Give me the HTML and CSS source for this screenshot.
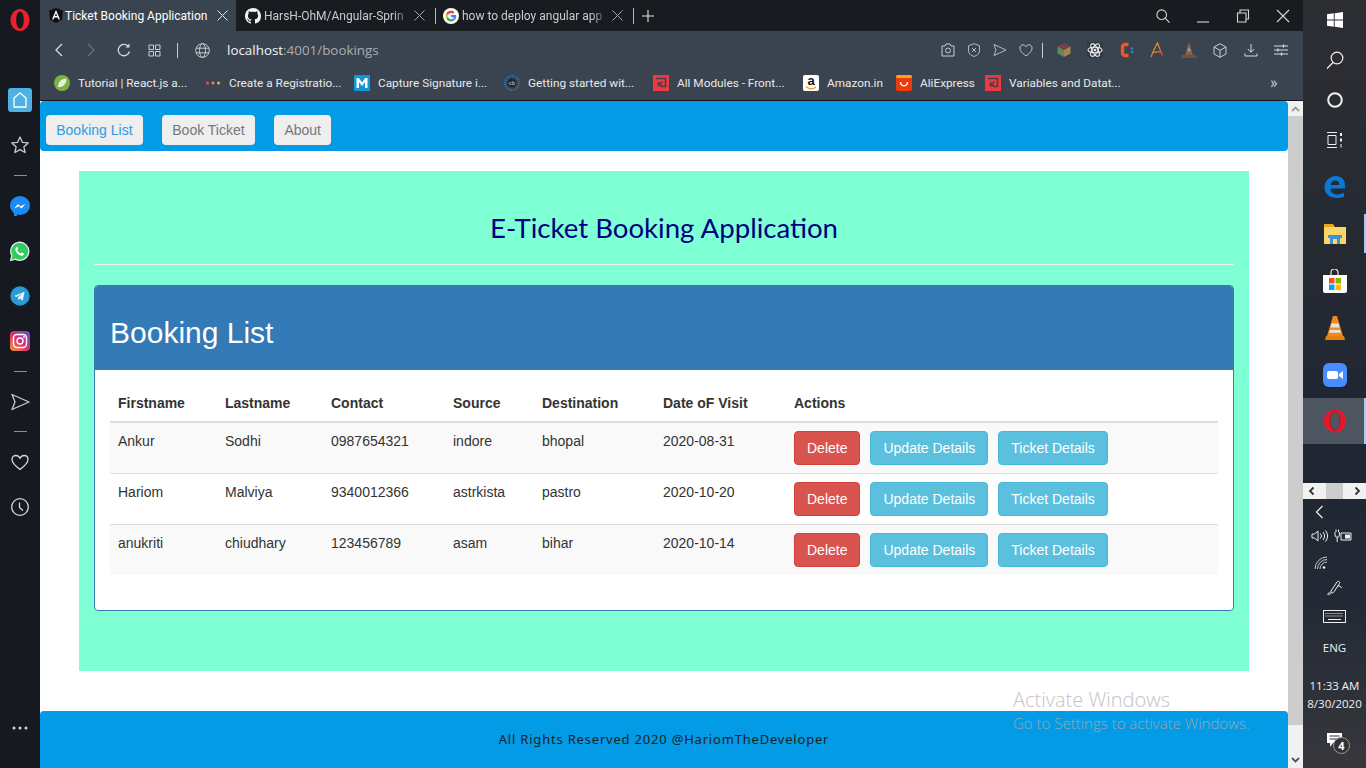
FILE: index.html
```html
<!DOCTYPE html>
<html lang="en">
<head>
<meta charset="UTF-8" />
<title>Ticket Booking Application</title>
<link rel="stylesheet" href="styles.css">
</head>
<body>

<!-- opera sidebar -->
<aside class="sidebar">
  <div class="side-logo">
    <svg width="20" height="24" viewBox="0 0 20 24"><path fill-rule="evenodd" d="M10 1C4.500 1 .5 6 .5 12s4 11 9.500 11 9.500-5 9.500-11S15.500 1 10 1zm0 2.500c2.300 0 3.800 3.800 3.800 8.500s-1.500 8.500-3.800 8.500-3.800-3.800-3.800-8.500S7.700 3.500 10 3.500z" fill="#e8212e"/></svg>
  </div>
  <div class="side-home">
    <svg width="24" height="24" viewBox="0 0 24 24"><rect width="24" height="24" rx="3" fill="#4fb0e3"/><path d="M6 19V10l6-5 6 5v9z" fill="none" stroke="#fff" stroke-width="1.300" stroke-linejoin="round"/></svg>
  </div>
  <div class="side-item star">
    <svg width="20" height="20" viewBox="0 0 20 20"><path d="M10 2l2.400 5.300 5.800.6-4.300 3.900 1.200 5.700-5.100-2.900-5.100 2.900 1.200-5.700L1.800 7.900l5.800-.6z" fill="none" stroke="#c9ccd0" stroke-width="1.300" stroke-linejoin="round"/></svg>
  </div>
  <div class="side-dash"></div>
  <div class="side-item">
    <svg width="20" height="20" viewBox="0 0 20 20"><ellipse cx="10" cy="9.500" rx="10" ry="9.500" fill="#1a8cf5"/><path d="M4 15h3v5l-3 0z" fill="#1a8cf5"/><path d="M4 12.500l4-4.500 2.500 2.200L15.500 8l-4 4.500L9 10.300z" fill="#fff"/></svg>
  </div>
  <div class="side-item">
    <svg width="20" height="20" viewBox="0 0 20 20"><path d="M.5 19.500l1.400-4.800a9 9 0 1 1 3.400 3.400z" fill="#2ecc5e" stroke="#e8e8e8" stroke-width="1.300"/><path d="M7 5.500l1.200 2.600-.9 1.200c.7 1.400 1.800 2.400 3.200 3.100l1.200-1 2.500 1.200c-.1 1.600-1.500 2.400-2.900 2.100-3.200-.7-5.500-3-6-6 0-1.400.8-2.700 2.700-3.200z" fill="#fff"/></svg>
  </div>
  <div class="side-item">
    <svg width="20" height="20" viewBox="0 0 20 20"><circle cx="10" cy="10" r="9.700" fill="#2a9ad6"/><path d="M4 10l10.500-4.300-1.700 9-3-2.200-1.500 1.500-.4-2.600 5-4.300-6.200 3.800z" fill="#e6f3fa"/></svg>
  </div>
  <div class="side-item">
    <svg width="20" height="20" viewBox="0 0 20 20"><defs><linearGradient id="ig" x1="0" y1="1" x2="1" y2="0"><stop offset="0" stop-color="#f9a12e"/><stop offset=".45" stop-color="#e1306c"/><stop offset="1" stop-color="#5b51d8"/></linearGradient></defs><rect width="20" height="20" rx="4" fill="url(#ig)"/><rect x="3.500" y="3.500" width="13" height="13" rx="3.500" fill="none" stroke="#fff" stroke-width="1.400"/><circle cx="10" cy="10" r="3" fill="none" stroke="#fff" stroke-width="1.400"/><circle cx="14" cy="6" r=".9" fill="#fff"/></svg>
  </div>
  <div class="side-dash"></div>
  <div class="side-item">
    <svg width="20" height="20" viewBox="0 0 20 20"><path d="M2 2.500L19 10 2 17.500 5 10z" fill="none" stroke="#c9ccd0" stroke-width="1.300" stroke-linejoin="round"/></svg>
  </div>
  <div class="side-dash"></div>
  <div class="side-item">
    <svg width="20" height="20" viewBox="0 0 20 20"><path d="M10 17.500C4 13 2 10.500 2 7.500 2 5 3.800 3.500 5.800 3.500c1.800 0 3.300 1 4.200 2.700.9-1.700 2.400-2.700 4.200-2.700C16.200 3.500 18 5 18 7.500c0 3-2 5.500-8 10z" fill="none" stroke="#d5d7da" stroke-width="1.300"/></svg>
  </div>
  <div class="side-item">
    <svg width="20" height="20" viewBox="0 0 20 20"><circle cx="10" cy="10" r="8.300" fill="none" stroke="#d5d7da" stroke-width="1.300"/><path d="M9.500 5.500v5l3.500 3" fill="none" stroke="#d5d7da" stroke-width="1.300"/></svg>
  </div>
  <div class="side-more">
    <svg width="16" height="4" viewBox="0 0 16 4"><circle cx="2" cy="2" r="1.500" fill="#d5d7da"/><circle cx="8" cy="2" r="1.500" fill="#d5d7da"/><circle cx="14" cy="2" r="1.500" fill="#d5d7da"/></svg>
  </div>
</aside>

<div class="browser">
  <!-- tabs -->
  <div class="tabstrip">
    <div class="tab active">
      <svg width="14" height="15" viewBox="0 0 14 15"><path d="M7 0l7 2.500-1.100 9.200L7 15l-5.900-3.300L0 2.500z" fill="#0d0f12"/><path d="M7 2L3 11.500h1.500l.8-2h3.400l.8 2H11zM5.900 8L7 5.200 8.100 8z" fill="#fff"/></svg>
      <span class="tab-title">Ticket Booking Application</span>
      <svg class="tab-close" width="11" height="11" viewBox="0 0 11 11"><path d="M.5.500l10 10M10.500.5l-10 10" stroke="#e4e5e7"/></svg>
    </div>
    <div class="tab">
      <svg width="16" height="16" viewBox="0 0 16 16"><path fill="#f2f2f2" d="M8 0C3.580 0 0 3.580 0 8c0 3.540 2.290 6.530 5.470 7.590.4.070.55-.17.55-.38 0-.19-.01-.82-.01-1.490-2.010.37-2.530-.49-2.690-.94-.09-.23-.48-.94-.82-1.130-.28-.15-.68-.52-.01-.53.63-.01 1.080.58 1.230.82.720 1.210 1.870.87 2.330.66.070-.52.280-.87.510-1.070-1.780-.2-3.640-.89-3.640-3.950 0-.87.310-1.590.82-2.150-.08-.2-.36-1.020.08-2.120 0 0 .67-.21 2.200.82.640-.18 1.320-.27 2-.27s1.360.09 2 .27c1.530-1.040 2.200-.82 2.200-.82.440 1.100.16 1.920.08 2.120.51.560.82 1.270.82 2.150 0 3.070-1.870 3.750-3.650 3.950.29.250.54.730.54 1.480 0 1.070-.01 1.930-.01 2.200 0 .21.150.46.550.38A8.013 8.013 0 0 0 16 8c0-4.420-3.580-8-8-8z"/></svg>
      <span class="tab-title faded">HarsH-OhM/Angular-Sprin</span>
      <svg class="tab-close" width="11" height="11" viewBox="0 0 11 11"><path d="M.5.500l10 10M10.500.5l-10 10" stroke="#a5a8ad"/></svg>
    </div>
    <div class="tab-sep"></div>
    <div class="tab">
      <svg width="16" height="16" viewBox="0 0 16 16"><circle cx="8" cy="8" r="8" fill="#fff"/><path d="M13.200 8.200c0-.4 0-.8-.1-1.100H8v2.100h2.900c-.1.700-.5 1.200-1.100 1.600l1.700 1.300c1-.9 1.700-2.300 1.700-3.900z" fill="#4285f4"/><path d="M8 13.500c1.500 0 2.700-.5 3.500-1.400l-1.700-1.300c-.5.300-1.100.5-1.800.5-1.400 0-2.600-1-3-2.200L3.200 10c.9 2 2.700 3.500 4.800 3.500z" fill="#34a853"/><path d="M5 8.900c-.2-.6-.2-1.200 0-1.800L3.200 5.800c-.7 1.400-.7 3 0 4.300z" fill="#fbbc05"/><path d="M8 4.900c.8 0 1.500.3 2 .8l1.500-1.500C10.600 3.300 9.400 2.800 8 2.800c-2.100 0-3.900 1.300-4.800 3L5 7.100c.4-1.200 1.600-2.200 3-2.200z" fill="#ea4335"/></svg>
      <span class="tab-title faded">how to deploy angular app</span>
      <svg class="tab-close" width="11" height="11" viewBox="0 0 11 11"><path d="M.5.500l10 10M10.500.5l-10 10" stroke="#a5a8ad"/></svg>
    </div>
    <div class="tab-sep"></div>
    <div class="tab-plus">
      <svg width="12" height="12" viewBox="0 0 12 12"><path d="M6 0v12M0 6h12" stroke="#e4e5e7" stroke-width="1.100"/></svg>
    </div>
    <div class="win-btns">
      <svg width="14" height="14" viewBox="0 0 16 16"><circle cx="6.500" cy="6.500" r="5.500" fill="none" stroke="#d5d7da" stroke-width="1.200"/><path d="M10.500 10.500l5 5" stroke="#d5d7da" stroke-width="1.300"/></svg>
      <svg width="14" height="14" viewBox="0 0 14 14"><path d="M1 13h12" stroke="#d5d7da" stroke-width="1.100"/></svg>
      <svg width="14" height="14" viewBox="0 0 14 14"><path d="M1.500 4h8.500v9H1.500zM4 4V1h8.500v9H10" fill="none" stroke="#d5d7da" stroke-width="1.100"/></svg>
      <svg width="14" height="14" viewBox="0 0 14 14"><path d="M1 1l12 12M13 1L1 13" stroke="#d5d7da" stroke-width="1.100"/></svg>
    </div>
  </div>

  <!-- address bar -->
  <div class="toolbar">
    <div class="tool-nav">
      <svg width="10" height="14" viewBox="0 0 10 14"><path d="M8 1L2 7l6 6" fill="none" stroke="#d8dadd" stroke-width="1.300"/></svg>
      <svg width="10" height="14" viewBox="0 0 10 14"><path d="M2 1l6 6-6 6" fill="none" stroke="#68717c" stroke-width="1.300"/></svg>
      <svg class="reload" width="14" height="14" viewBox="0 0 14 14"><path d="M12.500 8.500A5.700 5.700 0 1 1 11 3" fill="none" stroke="#d8dadd" stroke-width="1.300"/><path d="M12.500 .5v4h-4z" fill="#d8dadd"/></svg>
      <svg class="speed" width="13" height="13" viewBox="0 0 13 13"><path d="M1 1h4.500v4.500H1zM7.500 1H12v4.500H7.500zM1 7.500h4.500V12H1zM7.500 7.500H12V12H7.500z" fill="none" stroke="#c9ccd0"/></svg>
    </div>
    <div class="tool-sep"></div>
    <svg class="globe" width="15" height="15" viewBox="0 0 15 15"><circle cx="7.500" cy="7.500" r="6.800" fill="none" stroke="#c9ccd0"/><ellipse cx="7.500" cy="7.500" rx="3" ry="6.800" fill="none" stroke="#c9ccd0"/><path d="M1 5.200h13M1 9.800h13" stroke="#c9ccd0"/></svg>
    <div class="url"><span class="url-host">localhost</span>:4001/bookings</div>
    <div class="tool-icons">
      <div class="tool-group left">
        <svg width="14" height="14" viewBox="0 0 14 14"><path d="M1 3h3l1-2h4l1 2h3v10H1z" fill="none" stroke="#c9ccd0"/><circle cx="7" cy="7.500" r="2.500" fill="none" stroke="#c9ccd0"/></svg>
        <svg width="14" height="14" viewBox="0 0 14 14"><path d="M7 .7l5.500 2v5c0 3-2.500 4.800-5.500 5.800-3-1-5.500-2.800-5.500-5.800v-5z" fill="none" stroke="#b5b9be"/><path d="M5 5l4 4M9 5L5 9" stroke="#b5b9be"/></svg>
        <svg width="14" height="14" viewBox="0 0 14 14"><path d="M1 1.500L13 7 1 12.500 3 7z" fill="none" stroke="#b5b9be" stroke-linejoin="round"/></svg>
        <svg width="14" height="14" viewBox="0 0 14 14"><path d="M7 13C2.500 9.500 1 7.500 1 5 1 3 2.500 1.800 4 1.800c1.300 0 2.400.7 3 2 .6-1.300 1.700-2 3-2 1.500 0 3 1.200 3 3.200 0 2.500-1.500 4.500-6 8z" fill="none" stroke="#c9ccd0"/></svg>
      </div>
      <div class="tool-sep small"></div>
      <div class="tool-group">
        <svg width="14" height="14" viewBox="0 0 14 14"><path d="M7 0l6.500 3.500L7 7 .5 3.500z" fill="#7a3f4b"/><path d="M.5 3.500L7 7v7L.5 10.500z" fill="#5d8a5e"/><path d="M13.500 3.500L7 7v7l6.500-3.500z" fill="#a5874d"/></svg>
        <svg width="16" height="16" viewBox="0 0 16 16"><rect width="16" height="16" fill="#323a43"/><g fill="none" stroke="#e6e8ea" stroke-width="1.100"><ellipse cx="8" cy="8" rx="7" ry="2.800"/><ellipse cx="8" cy="8" rx="7" ry="2.800" transform="rotate(60 8 8)"/><ellipse cx="8" cy="8" rx="7" ry="2.800" transform="rotate(120 8 8)"/></g><circle cx="8" cy="8" r="1.300" fill="#e6e8ea"/></svg>
        <svg width="14" height="16" viewBox="0 0 14 16"><path d="M8.500 2.500H5A2.500 2.500 0 0 0 2.500 5v6A2.500 2.500 0 0 0 5 13.500h3.500" fill="none" stroke="#e9572a" stroke-width="3.400"/><path d="M12 5.500v2M12 9v2" stroke="#3f84c9" stroke-width="2.400"/></svg>
        <svg width="14" height="16" viewBox="0 0 14 16"><defs><linearGradient id="ang" x1="0" y1="0" x2="1" y2="1"><stop offset="0" stop-color="#e8b03c"/><stop offset="1" stop-color="#d8482c"/></linearGradient></defs><path d="M1 15C3 10 5 5 7.500 1c1.500 4 3 8 5 12.500M2.500 10.500c3-.6 6-.8 8.500-.5" fill="none" stroke="url(#ang)" stroke-width="1.300"/></svg>
        <svg width="16" height="16" viewBox="0 0 16 16"><path d="M8 0L4 13h8z" fill="#8a6248"/><path d="M1 13h14l1 3H0z" fill="#70513b"/><path d="M7 6l3 2-3 2z" fill="#a8a29c"/></svg>
        <svg width="14" height="15" viewBox="0 0 14 15"><path d="M7 .7l6 3.300v7L7 14.300 1 11V4zM1 4l6 3.300L13 4M7 7.300v7" fill="none" stroke="#c9ccd0"/></svg>
        <svg width="14" height="14" viewBox="0 0 14 14"><path d="M7 1v8M3.800 6L7 9.300 10.200 6M1 10.500V13h12v-2.500" fill="none" stroke="#d5d7da"/></svg>
        <svg width="14" height="12" viewBox="0 0 14 12"><path d="M0 2h14M0 6h14M0 10h14" stroke="#d5d7da"/><path d="M9.500 .5v3M4 4.500v3M7.500 8.500v3" stroke="#d5d7da" stroke-width="1.400"/></svg>
      </div>
    </div>
  </div>

  <!-- bookmarks -->
  <div class="bookmarks">
    <div class="bm">
      <svg width="16" height="16" viewBox="0 0 16 16"><circle cx="8" cy="8" r="8" fill="#7cb342"/><path d="M4 12c0-5 3-8 8.500-8.500C12.500 9 9 12.500 4 12z" fill="#e6f2d8"/></svg>
      <span>Tutorial | React.js a...</span>
    </div>
    <div class="bm">
      <svg width="16" height="16" viewBox="0 0 16 16"><circle cx="2.500" cy="8" r="1.500" fill="#e8574c"/><circle cx="8" cy="8" r="1.500" fill="#eb8f43"/><circle cx="13.500" cy="8" r="1.500" fill="#e9b44c"/></svg>
      <span>Create a Registratio...</span>
    </div>
    <div class="bm">
      <svg width="16" height="16" viewBox="0 0 16 16"><rect width="16" height="16" fill="#1296db"/><path d="M2.500 13V3h2.300L8 7.500 11.200 3h2.300v10h-2.500V7L8 11 5 7v6z" fill="#fff"/></svg>
      <span>Capture Signature i...</span>
    </div>
    <div class="bm">
      <svg width="16" height="16" viewBox="0 0 16 16"><circle cx="8" cy="8" r="7" fill="none" stroke="#2d7fb5" stroke-width="2" stroke-dasharray="1 1.200"/><circle cx="8" cy="8" r="4.500" fill="#20262c"/><text x="8" y="10" text-anchor="middle" font-family="Liberation Sans" font-size="5.500" font-weight="700" fill="#aab0b6">cb</text></svg>
      <span>Getting started wit...</span>
    </div>
    <div class="bm">
      <svg width="16" height="16" viewBox="0 0 16 16"><rect width="16" height="16" fill="#f0393e"/><path d="M3 3.500h9.500v8H8M9.500 6.500L5.500 10.500M5.500 7v3.500H9" fill="none" stroke="#3a4450" stroke-width="1.600"/></svg>
      <span>All Modules - Front...</span>
    </div>
    <div class="bm">
      <span class="bm-amazon">a<svg class="smile" width="12" height="4" viewBox="0 0 12 4"><path d="M1 .5c3 3 7 3 10 .5" fill="none" stroke="#f09a1a" stroke-width="1.300"/></svg></span>
      <span>Amazon.in</span>
    </div>
    <div class="bm">
      <svg width="16" height="16" viewBox="0 0 16 16"><rect width="16" height="16" rx="2" fill="#ee3a0c"/><rect width="16" height="3" rx="1.500" fill="#f8a21e"/><path d="M4.500 7c0 5 7 5 7 0" fill="none" stroke="#fff" stroke-width="1.300"/></svg>
      <span>AliExpress</span>
    </div>
    <div class="bm">
      <svg width="16" height="16" viewBox="0 0 16 16"><rect width="16" height="16" fill="#f0393e"/><path d="M3 3.500h9.500v8H8M9.500 6.500L5.500 10.500M5.500 7v3.500H9" fill="none" stroke="#3a4450" stroke-width="1.600"/></svg>
      <span>Variables and Datat...</span>
    </div>
    <div class="bm-more">»</div>
  </div>

  <!-- page + scrollbar -->
  <div class="viewport">
    <div class="page">
      <nav class="topnav">
        <a href="#" class="nav-btn current">Booking List</a>
        <a href="#" class="nav-btn">Book Ticket</a>
        <a href="#" class="nav-btn">About</a>
      </nav>

      <div class="container">
        <h1 class="app-title">E-Ticket Booking Application</h1>
        <hr class="title-rule">

        <div class="panel">
          <div class="panel-heading">
            <h2>Booking List</h2>
          </div>
          <div class="panel-body">
            <table class="booking-table">
              <colgroup>
                <col class="col-first"><col class="col-last"><col class="col-contact"><col class="col-source"><col class="col-dest"><col class="col-date"><col>
              </colgroup>
              <thead>
                <tr><th>Firstname</th><th>Lastname</th><th>Contact</th><th>Source</th><th>Destination</th><th>Date oF Visit</th><th>Actions</th></tr>
              </thead>
              <tbody>
                <tr>
                  <td>Ankur</td><td>Sodhi</td><td>0987654321</td><td>indore</td><td>bhopal</td><td>2020-08-31</td>
                  <td><div class="actions"><button class="btn btn-danger">Delete</button><button class="btn btn-info">Update Details</button><button class="btn btn-info">Ticket Details</button></div></td>
                </tr>
                <tr>
                  <td>Hariom</td><td>Malviya</td><td>9340012366</td><td>astrkista</td><td>pastro</td><td>2020-10-20</td>
                  <td><div class="actions"><button class="btn btn-danger">Delete</button><button class="btn btn-info">Update Details</button><button class="btn btn-info">Ticket Details</button></div></td>
                </tr>
                <tr>
                  <td>anukriti</td><td>chiudhary</td><td>123456789</td><td>asam</td><td>bihar</td><td>2020-10-14</td>
                  <td><div class="actions"><button class="btn btn-danger">Delete</button><button class="btn btn-info">Update Details</button><button class="btn btn-info">Ticket Details</button></div></td>
                </tr>
              </tbody>
            </table>
          </div>
        </div>
      </div>

      <footer class="site-footer">All Rights Reserved 2020 @HariomTheDeveloper</footer>
    </div>

    <div class="scrollbar">
      <div class="sb-btn"><svg width="9" height="6" viewBox="0 0 9 6"><path d="M1 5l3.500-3.500L8 5" fill="none" stroke="#9a9a9a" stroke-width="1.800"/></svg></div>
      <div class="sb-thumb"></div>
      <div class="sb-rest"><svg width="9" height="6" viewBox="0 0 9 6"><path d="M1 1l3.500 3.500L8 1" fill="none" stroke="#555" stroke-width="1.800"/></svg></div>
    </div>

    <div class="watermark">
      <div class="wm-big">Activate Windows</div>
      <div class="wm-small">Go to Settings to activate Windows.</div>
    </div>
  </div>
</div>

<!-- windows taskbar on the right -->
<aside class="taskbar">
  <div class="tb-item short">
    <svg width="16" height="16" viewBox="0 0 16 16"><path d="M0 2.300l6.800-1v6.300H0zM7.700 1.200L16 0v7.600H7.700zM0 8.500h6.800v6.300L0 13.800zM7.700 8.500H16V16l-8.300-1.200z" fill="#fff"/></svg>
  </div>
  <div class="tb-item short">
    <svg width="18" height="18" viewBox="0 0 18 18"><circle cx="11" cy="7" r="5.800" fill="none" stroke="#f0f0f0" stroke-width="1.200"/><path d="M7 11.500l-6 6" stroke="#f0f0f0" stroke-width="1.300"/></svg>
  </div>
  <div class="tb-item short">
    <svg width="16" height="16" viewBox="0 0 16 16"><circle cx="8" cy="8" r="6.800" fill="none" stroke="#f0f0f0" stroke-width="2"/></svg>
  </div>
  <div class="tb-item short">
    <svg width="16" height="16" viewBox="0 0 16 16"><path d="M0 .5h10M0 15.500h10M1 3.500h8v9H1z" fill="none" stroke="#f0f0f0"/><path d="M13 1h2v3h-2zM13 6.500h2v3h-2z" fill="#f0f0f0"/><path d="M14 12v3.500" stroke="#f0f0f0"/></svg>
  </div>
  <div class="tb-item edge">
    <svg width="21" height="22" viewBox="0 0 21 22"><path d="M21 12.500H6.500c0 4 3.500 6 7 6 2.500 0 4.500-.6 6.500-1.700v4C18 22 15.500 22 13 22 6 22 .5 18 .5 11.500.5 5 5.500 0 12 0c5.500 0 9 3.500 9 9.500zM15.500 9c0-2.500-1.500-4.500-4.300-4.500C8.700 4.500 6.800 6.500 6.500 9z" fill="#0a78d7"/></svg>
  </div>
  <div class="tb-item strip">
    <svg width="22" height="20" viewBox="0 0 22 20"><path d="M0 0h9l2 3H0z" fill="#e8a91f"/><path d="M0 3h22v17H0z" fill="#f9d56a"/><path d="M4 11h14v3h-2v6H6v-6H4z" fill="#3d91d6"/><path d="M9 15h4v5H9z" fill="#f9d56a"/></svg>
  </div>
  <div class="tb-item">
    <svg width="24" height="24" viewBox="0 0 24 24"><path d="M0 6h24v16a2 2 0 0 1-2 2H2a2 2 0 0 1-2-2z" fill="#fff"/><path d="M8 7V3.500a3.500 3.500 0 0 1 7 0V7" fill="none" stroke="#e8e8e8" stroke-width="1.200"/><path d="M6 9h5.500v5.500H6z" fill="#f25022"/><path d="M12.500 9H18v5.500h-5.500z" fill="#7fba00"/><path d="M6 15.500h5.500V21H6z" fill="#00a4ef"/><path d="M12.500 15.500H18V21h-5.500z" fill="#ffb900"/></svg>
  </div>
  <div class="tb-item">
    <svg width="20" height="24" viewBox="0 0 20 24"><path d="M8 0h4l6 20H2z" fill="#f08a1c"/><path d="M6.500 7.500h7l1 4h-9zM5 14h10l.8 2.800H4.200z" fill="#e6e6e6"/><path d="M1 20h18l1 4H0z" fill="#e8800f"/></svg>
  </div>
  <div class="tb-item">
    <svg width="24" height="24" viewBox="0 0 24 24"><rect width="24" height="24" rx="6" fill="#4a8cff"/><rect x="4" y="8" width="11" height="8" rx="2" fill="#fff"/><path d="M16 11l4-3v8l-4-3z" fill="#fff"/></svg>
  </div>
  <div class="tb-item active">
    <svg width="24" height="24" viewBox="0 0 24 24"><path fill-rule="evenodd" d="M12 .5C5.500.5.800 5.800.8 12S5.500 23.500 12 23.500 23.200 18.200 23.200 12 18.500.5 12 .5zm0 2.500c2.700 0 4.500 4 4.500 9s-1.800 9-4.500 9-4.500-4-4.500-9 1.800-9 4.500-9z" fill="#e3172d"/><ellipse cx="12" cy="12" rx="5" ry="9.300" fill="none" stroke="#97202c" stroke-width="1"/></svg>
  </div>

  <div class="tb-scroll">
    <svg width="7" height="10" viewBox="0 0 7 10"><path d="M5.500 1.500L2 5l3.500 3.500" fill="none" stroke="#333" stroke-width="1.800"/></svg>
    <div class="tb-scroll-thumb"></div>
    <svg width="7" height="10" viewBox="0 0 7 10"><path d="M1.500 1.500L5 5 1.500 8.500" fill="none" stroke="#333" stroke-width="1.800"/></svg>
  </div>
  <div class="tray">
    <svg class="tray-back" width="9" height="14" viewBox="0 0 9 14"><path d="M7.500 1L1.500 7l6 6" fill="none" stroke="#f0f0f0" stroke-width="1.200"/></svg>
    <div class="tray-row">
      <svg width="18" height="14" viewBox="0 0 18 14"><path d="M1 5h2.500L7 2v10L3.500 9H1z" fill="none" stroke="#f0f0f0"/><path d="M9.500 4.500a4 4 0 0 1 0 5M12 3a6.500 6.500 0 0 1 0 8M14.500 1.500a9 9 0 0 1 0 11" fill="none" stroke="#f0f0f0"/></svg>
      <svg width="18" height="14" viewBox="0 0 18 14"><path d="M7 4h10v7H7z" fill="none" stroke="#f0f0f0"/><path d="M11 5.500h5v4h-5z" fill="#f0f0f0"/><path d="M1 3v3a2.200 2.200 0 0 0 4.400 0V3M2 .5V3M4.500 .5V3M3.200 8v5" fill="none" stroke="#f0f0f0"/></svg>
    </div>
    <svg class="tray-wifi" width="14" height="14" viewBox="0 0 14 14"><path d="M1 13A12 12 0 0 1 13 1M3.500 13A9.500 9.500 0 0 1 13 3.500M6 13a7 7 0 0 1 7-7" fill="none" stroke="#c4c7cb"/><circle cx="10" cy="11.500" r="1.300" fill="#f0f0f0"/></svg>
    <svg class="tray-pen" width="16" height="17" viewBox="0 0 16 17"><path d="M4 11l6-9c1-1.500 3.500 0 2.500 1.500l-6 9c-1 1-3-.5-2.500-1.500zM11 6c2 0 3 .5 3.500 2M4.500 13C3 14 1.500 15 .8 14.500s1-1.500 3-2.500" fill="none" stroke="#f0f0f0"/></svg>
    <svg class="tray-keys" width="23" height="13" viewBox="0 0 23 13"><rect x=".5" y=".5" width="22" height="12" fill="none" stroke="#f0f0f0"/><path d="M2.500 3.500h18M2.500 6h18" stroke="#f0f0f0" stroke-dasharray="1 1"/><path d="M5 9.500h13" stroke="#f0f0f0"/></svg>
    <div class="tray-lang">ENG</div>
    <div class="tray-clock">11:33 AM<br>8/30/2020</div>
    <div class="tray-note">
      <svg width="15" height="14" viewBox="0 0 15 14"><path d="M0 0h15v10H6l-3 4v-4H0z" fill="#fff"/><path d="M2.500 3h10M2.500 6h10" stroke="#333"/></svg>
      <span class="note-count">4</span>
    </div>
  </div>
</aside>

</body>
</html>
```

FILE: styles.css
```css
html, body {
  margin: 0;
  height: 100%;
}
body {
  display: flex;
  height: 768px;
  overflow: hidden;
  font-family: "Liberation Sans", Arial, sans-serif;
  font-size: 14px;
  line-height: 20px;
  color: #333;
  background: #fff;
}
svg { display: block; flex-shrink: 0; }

/* opera sidebar */
.sidebar {
  width: 40px;
  flex-shrink: 0;
  background: #16191f;
  display: flex;
  flex-direction: column;
  align-items: center;
}
.side-logo { height: 24px; margin-top: 8px; }
.side-home { margin-top: 56px; }
.side-item { height: 45px; display: flex; align-items: center; justify-content: center; }
.side-item.star { height: 46px; margin-top: 10px; }
.side-dash { width: 13px; height: 1px; background: #8a8d92; margin: 7px 0 7.500px; flex-shrink: 0; }
.side-more { margin-top: auto; margin-bottom: 38px; }

/* browser column */
.browser {
  flex: 1;
  min-width: 0;
  display: flex;
  flex-direction: column;
}
.tabstrip {
  height: 31px;
  flex-shrink: 0;
  background: #181b20;
  display: flex;
  align-items: center;
  color: #e4e5e7;
  font-family: Roboto, sans-serif;
  font-size: 12px;
}
.tab {
  width: 199px;
  height: 31px;
  display: flex;
  align-items: center;
  padding: 0 10px 0 9px;
  box-sizing: border-box;
  gap: 3px;
}
.tab.active {
  width: 196px;
  background: #3a4450;
  padding-right: 8px;
  gap: 2px;
  color: #fff;
}
.tab-title {
  flex: 1;
  min-width: 0;
  white-space: nowrap;
}
.tab-title.faded {
  color: #c9ccd0;
  -webkit-mask-image: linear-gradient(to right, #000 88%, transparent);
  mask-image: linear-gradient(to right, #000 88%, transparent);
}
.tab:nth-child(4) { width: 197px; padding-left: 7px; }
.tab-sep { width: 1px; height: 16px; background: #b5b9be; flex-shrink: 0; }
.tab-plus { margin-left: 8px; }
.win-btns {
  margin-left: auto;
  display: flex;
  align-items: center;
  gap: 26px;
  padding-right: 13px;
}

.toolbar {
  height: 38px;
  flex-shrink: 0;
  background: #3a4450;
  display: flex;
  align-items: center;
  padding-left: 14px;
}
.tool-nav { display: flex; align-items: center; gap: 22px; }
.tool-nav .reload { margin-left: -1px; }
.tool-nav .speed { margin-left: -5px; }
.tool-sep { width: 1px; height: 15px; background: #c9ccd0; margin: 0 17px 0 16px; }
.tool-sep.small { margin: 0 14px 0 9px; }
.url {
  margin-left: 17px;
  font-family: "Open Sans", sans-serif;
  font-size: 13.400px;
  color: #a9aeb5;
  white-space: nowrap;
}
.url-host { color: #f2f3f4; }
.tool-icons {
  margin-left: auto;
  display: flex;
  align-items: center;
  padding-right: 15px;
}
.tool-group { display: flex; align-items: center; gap: 16.500px; }
.tool-group.left { gap: 12px; }

.bookmarks {
  height: 27px;
  padding-bottom: 4px;
  flex-shrink: 0;
  background: #3a4450;
  display: grid;
  grid-template-columns: 151px 149px 150px 149px 150px 93px 89px 285px auto;
  align-items: center;
  padding-left: 14px;
  border-bottom: 1px solid #14161a;
  color: #e8e9eb;
  font-family: Roboto, sans-serif;
  font-size: 11.800px;
}
.bm { display: flex; align-items: center; gap: 8px; white-space: nowrap; overflow: hidden; }
.bm-amazon {
  width: 16px;
  height: 16px;
  background: #fff;
  border-radius: 2px;
  color: #111;
  font: bold 13px/12px "Liberation Sans", sans-serif;
  text-align: center;
  flex-shrink: 0;
  position: relative;
}
.bm-amazon .smile { position: absolute; left: 2px; bottom: 1px; }
.bm-more { font-size: 16px; color: #c9ccd0; }

/* page */
.viewport {
  flex: 1;
  min-height: 0;
  display: flex;
  position: relative;
}
.page {
  flex: 1;
  min-width: 0;
  overflow: hidden;
}
.topnav {
  height: 50px;
  background: #039be5;
  border-radius: 4px;
  display: flex;
  align-items: flex-start;
  gap: 19.250px;
  padding: 14px 0 0 6px;
  box-sizing: border-box;
}
.nav-btn {
  height: 30px;
  padding: 0 10.250px;
  line-height: 30px;
  background: #eee;
  border-radius: 4px;
  color: #777;
  text-decoration: none;
}
.nav-btn.current { color: #2e9be0; }

.container {
  width: 1170px;
  margin: 20px auto 40px;
  padding: 41px 15px 40px;
  box-sizing: border-box;
  background: #7fffd4;
}
.app-title {
  margin: 0;
  font-family: Lato, sans-serif;
  font-size: 27.600px;
  line-height: 32px;
  font-weight: 400;
  color: #000080;
  text-align: center;
}
.title-rule {
  margin: 20px 0;
  border: 0;
  border-top: 1px solid #eee;
}
.panel {
  background: #fff;
  border: 1px solid #337ab7;
  border-radius: 4px;
  margin-bottom: 20px;
}
.panel-heading {
  background: #337ab7;
  color: #fff;
  padding: 10px 15px;
  border-radius: 3px 3px 0 0;
}
.panel-heading h2 {
  margin: 20px 0 11px;
  font-size: 30px;
  line-height: 33px;
  font-weight: 400;
}
.panel-body { padding: 15px; }

.booking-table {
  width: 100%;
  table-layout: fixed;
  border-collapse: separate;
  border-spacing: 0;
  margin-bottom: 20px;
}
.col-first { width: 107px; }
.col-last { width: 106px; }
.col-contact { width: 122px; }
.col-source { width: 89px; }
.col-dest { width: 121px; }
.col-date { width: 131px; }
.booking-table th {
  padding: 8px;
  text-align: left;
  font-weight: 700;
  border-bottom: 2px solid #ddd;
}
.booking-table td {
  padding: 8px;
  vertical-align: top;
}
.booking-table tbody tr + tr td { border-top: 1px solid #ddd; }
.booking-table tbody tr:nth-child(odd) { background: #f9f9f9; }

.actions { display: flex; gap: 10px; }
.btn {
  height: 34px;
  padding: 6px 12px;
  box-sizing: border-box;
  border: 1px solid transparent;
  border-radius: 4px;
  font: 14px/20px "Liberation Sans", Arial, sans-serif;
  color: #fff;
  white-space: nowrap;
}
.btn-danger { background: #d9534f; border-color: #d43f3a; }
.btn-info { background: #5bc0de; border-color: #46b8da; }

.site-footer {
  height: 57px;
  background: #039be5;
  border-radius: 4px 4px 0 0;
  text-align: center;
  font-family: "Noto Sans", sans-serif;
  font-size: 13px;
  line-height: 57px;
  letter-spacing: .8px;
  color: #222;
}

/* scrollbar */
.scrollbar {
  width: 15px;
  flex-shrink: 0;
  display: flex;
  flex-direction: column;
  background: #f1f1f1;
}
.sb-btn {
  height: 15px;
  display: flex;
  align-items: center;
  justify-content: center;
}
.sb-thumb { height: 609px; background: #cdcdcd; }
.sb-rest {
  flex: 1;
  display: flex;
  align-items: flex-end;
  justify-content: center;
  padding-bottom: 5px;
}

/* sits over the page, like the real OS overlay */
.watermark {
  position: absolute;
  left: 973px;
  top: 587px;
  font-family: "Open Sans", sans-serif;
  font-weight: 300;
  pointer-events: none;
  white-space: nowrap;
}
.wm-big { font-size: 20px; line-height: 24px; color: #c4c4c4; }
.wm-small { font-size: 15px; line-height: 22px; color: #9aa8b2; }

/* windows taskbar */
.taskbar {
  width: 63px;
  flex-shrink: 0;
  background: linear-gradient(#2d2e32, #1f2632 60%, #242a35 80%, #38383c);
  display: flex;
  flex-direction: column;
  color: #f0f0f0;
  font-family: "Open Sans", sans-serif;
  font-size: 11.500px;
}
.tb-item {
  height: 47px;
  display: flex;
  align-items: center;
  justify-content: center;
  position: relative;
}
.tb-item.short { height: 40px; }
.tb-item.edge { margin-top: 3px; }
.tb-item.active { background: #4d5560; height: 46px; }
.tb-item.strip::after,
.tb-item.active::after {
  content: "";
  position: absolute;
  right: 0;
  top: 4px;
  bottom: 4px;
  width: 2px;
  background: #a8c8f8;
}
.tb-item.active::after { top: 0; bottom: 0; }
.tb-scroll {
  margin-top: 39px;
  height: 16px;
  background: #f1f1f1;
  display: flex;
  align-items: center;
  justify-content: space-between;
  padding: 0 5px;
}
.tb-scroll-thumb { width: 17px; height: 16px; background: #cdcdcd; margin: 0 3px; }
.tray {
  flex: 1;
  display: flex;
  flex-direction: column;
  align-items: center;
  position: relative;
}
.tray-back { margin: 6px 30px 0 0; }
.tray-row { display: flex; gap: 5px; margin: 10px 6px 0 0; }
.tray-wifi { margin: 13px 28px 0 0; }
.tray-pen { margin-top: 10px; }
.tray-keys { margin-top: 13px; }
.tray-lang { margin-top: 15px; line-height: 20px; }
.tray-clock { margin-top: 19px; text-align: center; line-height: 18px; white-space: nowrap; }
.tray-note { margin-top: 20px; position: relative; }
.note-count {
  position: absolute;
  left: 6px;
  top: 4px;
  width: 15px;
  height: 15px;
  border-radius: 50%;
  border: 1px solid #999;
  background: #333;
  font-size: 11px;
  font-weight: 700;
  line-height: 15px;
  text-align: center;
  color: #fff;
}
```
